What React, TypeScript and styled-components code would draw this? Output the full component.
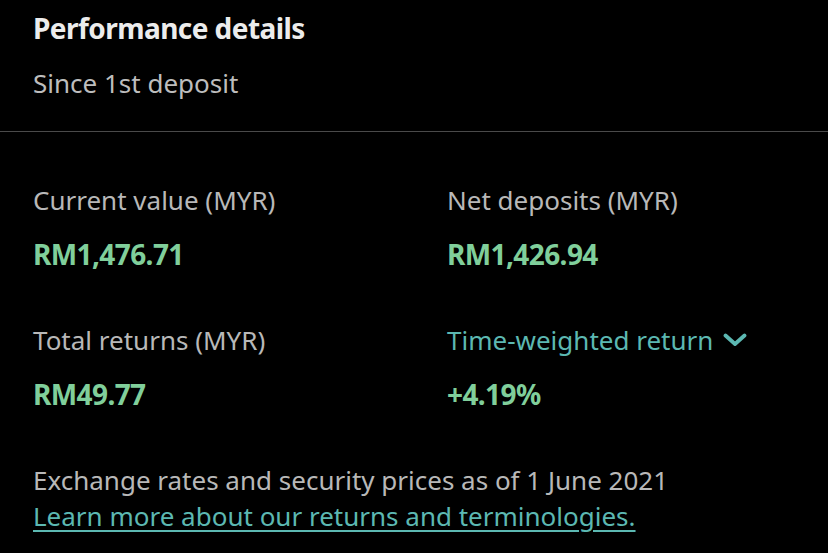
import { createGlobalStyle, styled } from "styled-components";

const GlobalStyle = createGlobalStyle`
  html, body {
    margin: 0;
    padding: 0;
    background-color: #000;
  }
  body {
    font-family: "Noto Sans", "Open Sans", sans-serif;
    -webkit-font-smoothing: antialiased;
  }
`;

const Page = styled.div`
  width: 828px;
  height: 553px;
  background-color: #000;
  overflow: hidden;
`;

const Header = styled.header`
  padding: 10px 33px 30px;
  border-bottom: 1px solid #4a4a4a;
`;

const Title = styled.h1`
  margin: 0 0 19px;
  font-size: 28px;
  line-height: 36px;
  font-weight: 700;
  color: #ececec;
  letter-spacing: -0.55px;
`;

const Subtitle = styled.p`
  margin: 0;
  font-size: 26px;
  line-height: 36px;
  color: #bdbdbd;
`;

const Stats = styled.section`
  display: grid;
  grid-template-columns: 1fr 1fr;
  row-gap: 50px;
  padding-top: 50px;
`;

const Stat = styled.div`
  padding-left: 33px;
  display: flex;
  flex-direction: column;
  gap: 18px;
`;

const Label = styled.div<{ $link?: boolean }>`
  display: flex;
  align-items: center;
  gap: 10px;
  font-size: 26px;
  line-height: 36px;
  color: ${(props) => (props.$link ? "#5cb8b2" : "#b8b8b8")};
`;

const Value = styled.div`
  font-size: 28px;
  line-height: 36px;
  font-weight: 700;
  color: #80cf9b;
  letter-spacing: -0.6px;
`;

const Footer = styled.footer`
  padding: 50px 33px 0;
  font-size: 26px;
  line-height: 36px;
  color: #b8b8b8;
`;

const FooterLink = styled.a`
  color: #5cb8b2;
  text-decoration: underline;
  text-underline-offset: 4px;
  text-decoration-thickness: 2px;
`;

const Chevron = () => (
  <svg width="24" height="14" viewBox="0 0 24 14" fill="none">
    <path
      d="M2.5 2.5 L12 11 L21.5 2.5"
      stroke="#5cb8b2"
      strokeWidth="3.8"
      strokeLinecap="round"
      strokeLinejoin="round"
    />
  </svg>
);

const stats = [
  { label: "Current value (MYR)", value: "RM1,476.71" },
  { label: "Net deposits (MYR)", value: "RM1,426.94" },
  { label: "Total returns (MYR)", value: "RM49.77" },
  { label: "Time-weighted return", value: "+4.19%", link: true },
];

function App() {
  return (
    <Page>
      <GlobalStyle />
      <Header>
        <Title>Performance details</Title>
        <Subtitle>Since 1st deposit</Subtitle>
      </Header>
      <Stats>
        {stats.map((stat) => (
          <Stat key={stat.label}>
            <Label $link={stat.link}>
              {stat.label}
              {stat.link && <Chevron />}
            </Label>
            <Value>{stat.value}</Value>
          </Stat>
        ))}
      </Stats>
      <Footer>
        Exchange rates and security prices as of 1 June 2021
        <br />
        <FooterLink href="#">Learn more about our returns and terminologies.</FooterLink>
      </Footer>
    </Page>
  );
}

export default App;
